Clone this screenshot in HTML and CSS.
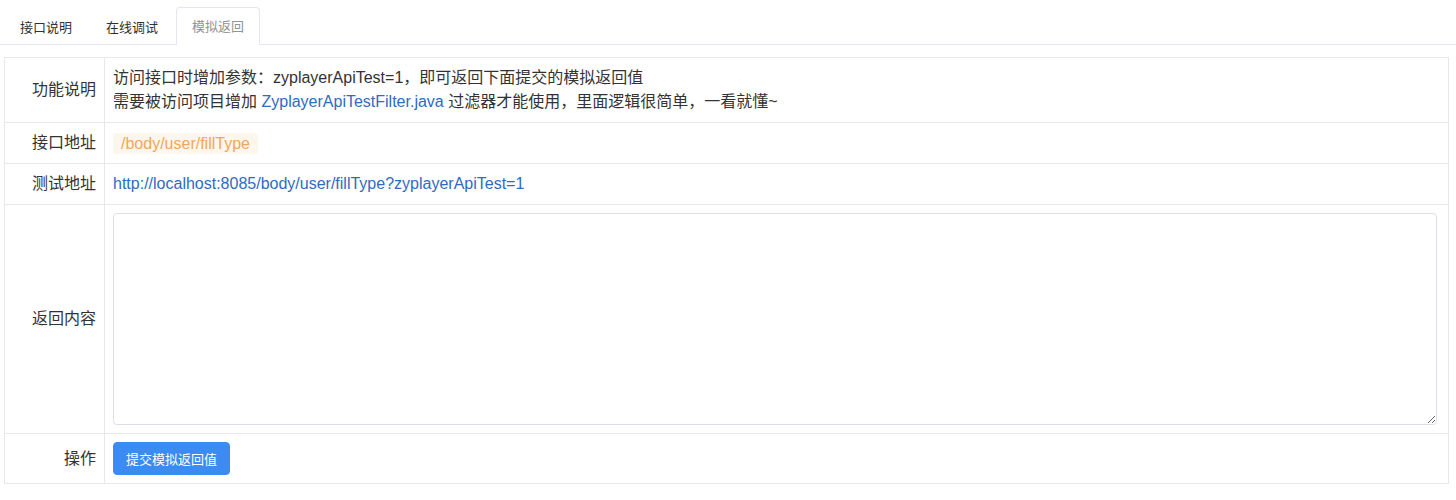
FILE: index.html
```html
<!DOCTYPE html>
<html lang="zh-CN">
<head>
    <meta charset="UTF-8">
    <title>模拟返回</title>
    <link rel="stylesheet" href="styles.css">
</head>
<body>
    <div class="tabs">
        <div class="tab">接口说明</div>
        <div class="tab">在线调试</div>
        <div class="tab active">模拟返回</div>
    </div>

    <table class="desc">
        <tr class="row-desc">
            <th>功能说明</th>
            <td>
                <div>访问接口时增加参数：zyplayerApiTest=1，即可返回下面提交的模拟返回值</div>
                <div>需要被访问项目增加 <a href="#">ZyplayerApiTestFilter.java</a> 过滤器才能使用，里面逻辑很简单，一看就懂~</div>
            </td>
        </tr>
        <tr>
            <th>接口地址</th>
            <td><span class="code">/body/user/fillType</span></td>
        </tr>
        <tr>
            <th>测试地址</th>
            <td><a href="#">http://localhost:8085/body/user/fillType?zyplayerApiTest=1</a></td>
        </tr>
        <tr>
            <th>返回内容</th>
            <td><textarea class="result"></textarea></td>
        </tr>
        <tr>
            <th>操作</th>
            <td><button class="btn">提交模拟返回值</button></td>
        </tr>
    </table>
</body>
</html>
```

FILE: styles.css
```css
body {
    margin: 0;
    font-family: "Liberation Sans", Arial, "Noto Sans CJK SC", sans-serif;
    font-size: 16px;
    color: #303133;
}
.tabs {
    display: flex;
    height: 44px;
    align-items: flex-end;
    padding-left: 4px;
    border-bottom: 1px solid #e4e7ed;
}
.tab {
    height: 37px;
    line-height: 37px;
    padding: 0 15px;
    margin-right: 2px;
    font-size: 13px;
    color: #303133;
    border: 1px solid transparent;
    border-bottom: none;
    box-sizing: border-box;
    margin-bottom: -1px;
}
.tab.active {
    color: #909399;
    background: #fff;
    height: 38px;
    border-color: #e4e7ed;
    border-radius: 4px 4px 0 0;
}
.desc {
    margin: 12px 7px 0 4px;
    width: calc(100% - 11px);
    border-collapse: collapse;
}
.desc th, .desc td {
    border: 1px solid #e8e8e8;
    padding: 8px;
    line-height: 24px;
    vertical-align: middle;
}
.desc th {
    width: 83px;
    text-align: right;
    font-weight: normal;
    color: #333;
}
.desc td {
    color: #333;
}
.desc a {
    color: #2f6bc4;
    text-decoration: none;
}
.code {
    display: inline-block;
    font-size: 16px;
    line-height: 19px;
    padding: 1px 8px;
    color: #f2a65a;
    background: #fdf6ec;
    border-radius: 3px;
    vertical-align: middle;
}
.result {
    display: block;
    width: calc(100% - 3px);
    height: 212px;
    box-sizing: border-box;
    border: 1px solid #dcdfe6;
    border-radius: 4px;
    padding: 5px 10px;
    font-family: inherit;
    font-size: 14px;
}
.btn {
    display: block;
    height: 33px;
    padding: 0 12px;
    font-family: inherit;
    font-size: 13px;
    color: #fff;
    background: #3b8bf2;
    border: 1px solid #3b8bf2;
    border-radius: 4px;
}
```
